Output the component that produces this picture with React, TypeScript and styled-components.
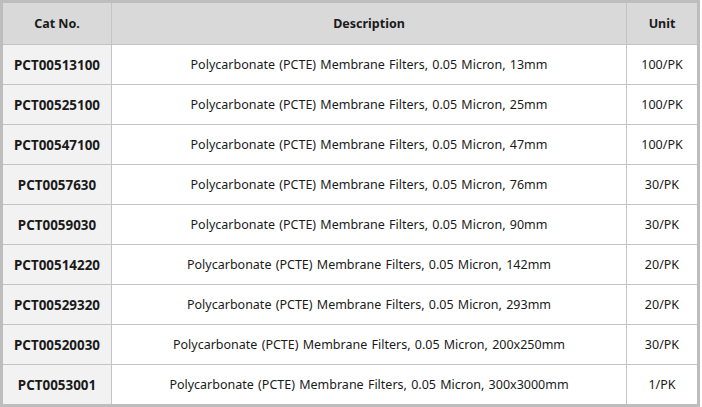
import * as React from "react";
import styled, { createGlobalStyle } from "styled-components";

const GlobalStyle = createGlobalStyle`
  html, body {
    margin: 0;
    padding: 0;
    background: #ffffff;
  }
`;

const Table = styled.table`
  width: 700px;
  border-collapse: collapse;
  border: 3px solid #bdbdbd;
  font-family: "Noto Sans", "Open Sans", sans-serif;
  font-size: 12.5px;
  color: #1a1a1a;
  table-layout: fixed;
`;

const Th = styled.th<{ width?: number }>`
  height: 41px;
  padding: 0;
  background: #d9d9d9;
  border: 1px solid #c4c4c4;
  font-weight: 700;
  text-align: center;
  width: ${props => (props.width ? `${props.width}px` : "auto")};
`;

const Td = styled.td<{ code?: boolean }>`
  height: 39px;
  padding: 0;
  border: 1px solid #c4c4c4;
  text-align: center;
  background: ${props => (props.code ? "#f2f2f2" : "#ffffff")};
  font-weight: ${props => (props.code ? 700 : 400)};
  font-size: ${props => (props.code ? "13.4px" : "12.5px")};
  word-spacing: 1px;
`;

interface Product {
  cat: string;
  size: string;
  unit: string;
}

const products: Product[] = [
  { cat: "PCT00513100", size: "13mm", unit: "100/PK" },
  { cat: "PCT00525100", size: "25mm", unit: "100/PK" },
  { cat: "PCT00547100", size: "47mm", unit: "100/PK" },
  { cat: "PCT0057630", size: "76mm", unit: "30/PK" },
  { cat: "PCT0059030", size: "90mm", unit: "30/PK" },
  { cat: "PCT00514220", size: "142mm", unit: "20/PK" },
  { cat: "PCT00529320", size: "293mm", unit: "20/PK" },
  { cat: "PCT00520030", size: "200x250mm", unit: "30/PK" },
  { cat: "PCT0053001", size: "300x3000mm", unit: "1/PK" },
];

const App: React.FC = () => (
  <>
    <GlobalStyle />
    <Table>
      <thead>
        <tr>
          <Th width={108}>Cat No.</Th>
          <Th>Description</Th>
          <Th width={70}>Unit</Th>
        </tr>
      </thead>
      <tbody>
        {products.map(p => (
          <tr key={p.cat}>
            <Td code>{p.cat}</Td>
            <Td>Polycarbonate (PCTE) Membrane Filters, 0.05 Micron, {p.size}</Td>
            <Td>{p.unit}</Td>
          </tr>
        ))}
      </tbody>
    </Table>
  </>
);

export default App;
